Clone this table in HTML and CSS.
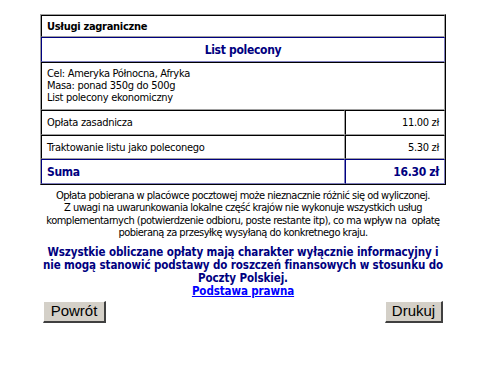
FILE: index.html
```html
<!DOCTYPE html>
<html lang="pl">
<head>
<meta charset="utf-8">
<title>Usługi zagraniczne</title>
<link rel="stylesheet" href="styles.css">
</head>
<body>
<div class="page">
  <table class="calc" cellspacing="0">
    <tr class="r-head">
      <td colspan="2" class="title">Usługi zagraniczne</td>
    </tr>
    <tr class="r-blue r-kind">
      <td colspan="2" class="kind">List polecony</td>
    </tr>
    <tr class="r-info">
      <td colspan="2" class="info">Cel: Ameryka Północna, Afryka<br>Masa: ponad 350g do 500g<br>List polecony ekonomiczny</td>
    </tr>
    <tr class="r-fee">
      <td class="label">Opłata zasadnicza</td>
      <td class="amount">11.00 zł</td>
    </tr>
    <tr class="r-fee r-fee2">
      <td class="label">Traktowanie listu jako poleconego</td>
      <td class="amount">5.30 zł</td>
    </tr>
    <tr class="r-blue r-sum">
      <td class="label sum">Suma</td>
      <td class="amount sum">16.30 zł</td>
    </tr>
  </table>

  <p class="note">Opłata pobierana w placówce pocztowej może nieznacznie różnić się od wyliczonej.<br>Z uwagi na uwarunkowania lokalne część krajów nie wykonuje wszystkich usług<br>komplementarnych (potwierdzenie odbioru, poste restante itp), co ma wpływ na&nbsp; opłatę<br>pobieraną za przesyłkę wysyłaną do konkretnego kraju.</p>

  <p class="warning">Wszystkie obliczane opłaty mają charakter wyłącznie informacyjny i<br>nie mogą stanowić podstawy do roszczeń finansowych w stosunku do<br>Poczty Polskiej.<br><a href="#" class="legal">Podstawa prawna</a></p>

  <div class="actions">
    <button type="button" class="btn btn-back">Powrót</button>
    <button type="button" class="btn btn-print">Drukuj</button>
  </div>
</div>
</body>
</html>
```
FILE: styles.css
```css
html, body {
  margin: 0;
  padding: 0;
  background: #ffffff;
}

body {
  font-family: "DejaVu Sans Condensed", "DejaVu Sans", sans-serif;
  font-stretch: condensed;
  font-size: 11px;
  letter-spacing: -0.3px;
  color: #000000;
}

.page {
  width: 406px;
  margin-left: 40px;
  padding-top: 14px;
}

/* table with classic raised outer frame and sunken cells */
.calc {
  width: 406px;
  border-collapse: separate;
  border-spacing: 0;
  border-top: 1px solid #a0a0a0;
  border-left: 1px solid #a0a0a0;
  border-right: 1px solid #000000;
  border-bottom: 1px solid #000000;
}

.calc td {
  border-top: 1px solid #000000;
  border-left: 1px solid #000000;
  border-right: 1px solid #a0a0a0;
  border-bottom: 1px solid #a0a0a0;
  padding: 0 5px;
  vertical-align: middle;
}

.r-head td { height: 20px; }
.r-kind td { height: 23px; }
.r-info td { height: 46px; }
.r-fee td { height: 23px; }
.r-fee2 td { height: 22px; }
.r-sum td { height: 23px; }

.r-blue td {
  border-top-color: #000080;
  border-left-color: #000080;
  border-right-color: #8080c0;
  border-bottom-color: #8080c0;
}

.title {
  font-weight: bold;
}

.kind {
  text-align: center;
  font-weight: bold;
  font-size: 12px;
  color: #000080;
}

.info {
  line-height: 12px;
}

.amount {
  width: 88px;
  text-align: right;
}

.sum {
  font-weight: bold;
  font-size: 12px;
  color: #000080;
}

.note {
  margin: 5px -10px 0;
  text-align: center;
  line-height: 12.4px;
  letter-spacing: -0.5px;
  white-space: nowrap;
}

.warning {
  margin: 6px -10px 0;
  text-align: center;
  font-weight: bold;
  font-size: 11.5px;
  letter-spacing: -0.1px;
  line-height: 13px;
  color: #000080;
  white-space: nowrap;
}

.legal {
  color: #0000ff;
  text-decoration: underline;
}

.actions {
  display: flex;
  justify-content: space-between;
  padding: 3px 3px 0;
}

.btn {
  font-family: "Liberation Sans", Arial, sans-serif;
  font-size: 15px;
  letter-spacing: 0;
  height: 22px;
  padding: 0;
  background: #d4d0c8;
  color: #000000;
  border-top: 1px solid #ffffff;
  border-left: 1px solid #ffffff;
  border-right: 2px solid #404040;
  border-bottom: 2px solid #404040;
  border-radius: 0;
  line-height: 18px;
}

.btn-back { width: 63px; }
.btn-print { width: 58px; }
```
